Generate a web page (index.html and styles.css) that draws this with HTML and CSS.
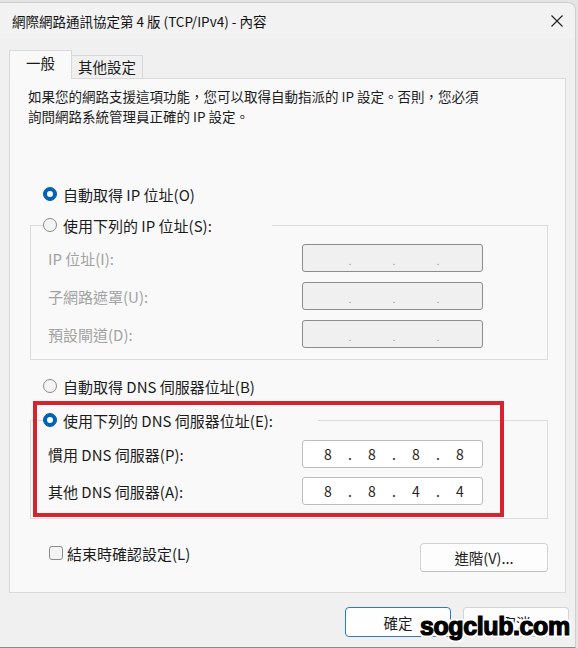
FILE: index.html
```html
<!DOCTYPE html>
<html lang="zh-Hant">
<head>
    <meta charset="UTF-8">
    <meta name="viewport" content="width=device-width, initial-scale=1.0">
    <title>網際網路通訊協定第 4 版 (TCP/IPv4) - 內容</title>
    <link rel="stylesheet" href="styles.css">
</head>
<body>
    <div class="window">
        <!-- Title bar -->
        <div class="titlebar">
            <span class="title">網際網路通訊協定第 4 版 (TCP/IPv4) - 內容</span>
            <svg class="close" width="12" height="12" viewBox="0 0 12 12">
                <path d="M0.5 0.5 L11.5 11.5 M11.5 0.5 L0.5 11.5" stroke="#1f1f1f" stroke-width="1.1" fill="none"/>
            </svg>
        </div>

        <!-- Tabs -->
        <div class="tabs">
            <div class="tab active">一般</div>
            <div class="tab">其他設定</div>
        </div>

        <div class="panel">
            <p class="intro">如果您的網路支援這項功能，您可以取得自動指派的 IP 設定。否則，您必須<br>詢問網路系統管理員正確的 IP 設定。</p>

            <div class="option first">
                <span class="radio on"></span>自動取得 IP 位址(O)
            </div>

            <div class="group ip-group">
                <div class="option legend ip-legend">
                    <span class="radio"></span>使用下列的 IP 位址(S):
                </div>
                <div class="fields">
                    <div class="field-row">
                        <span class="label disabled">IP 位址(I):</span>
                        <div class="ipbox off"><span></span><i>.</i><span></span><i>.</i><span></span><i>.</i><span></span></div>
                    </div>
                    <div class="field-row">
                        <span class="label disabled">子網路遮罩(U):</span>
                        <div class="ipbox off"><span></span><i>.</i><span></span><i>.</i><span></span><i>.</i><span></span></div>
                    </div>
                    <div class="field-row">
                        <span class="label disabled">預設閘道(D):</span>
                        <div class="ipbox off"><span></span><i>.</i><span></span><i>.</i><span></span><i>.</i><span></span></div>
                    </div>
                </div>
            </div>

            <div class="option dns-auto">
                <span class="radio"></span>自動取得 DNS 伺服器位址(B)
            </div>

            <div class="group dns-group">
                <div class="option legend dns-legend">
                    <span class="radio on"></span>使用下列的 DNS 伺服器位址(E):
                </div>
                <div class="fields dns-fields">
                    <div class="field-row">
                        <span class="label">慣用 DNS 伺服器(P):</span>
                        <div class="ipbox"><span>8</span><i>.</i><span>8</span><i>.</i><span>8</span><i>.</i><span>8</span></div>
                    </div>
                    <div class="field-row">
                        <span class="label">其他 DNS 伺服器(A):</span>
                        <div class="ipbox"><span>8</span><i>.</i><span>8</span><i>.</i><span>4</span><i>.</i><span>4</span></div>
                    </div>
                </div>
            </div>

            <div class="bottom-row">
                <div class="check-row"><span class="checkbox"></span>結束時確認設定(L)</div>
                <button class="btn advanced">進階(V)...</button>
            </div>
        </div>

        <div class="footer">
            <button class="btn default">確定</button>
            <button class="btn">取消</button>
        </div>

        <!-- annotation over the screenshot -->
        <div class="highlight"></div>
        <div class="watermark">sogclub.com</div>
    </div>
</body>
</html>
```

FILE: styles.css
```css
* {
    box-sizing: border-box;
}

body {
    margin: 0;
    background-color: #e4e4e4;
    font-family: "Noto Sans CJK TC", "Noto Sans", sans-serif;
    font-size: 15px;
    color: #1b1b1b;
}

.window {
    position: relative;
    width: 576px;
    height: 646px;
    margin-top: 2px;
    background-color: #f0f0f0;
    border-top: 1px solid #cfcfcf;
    border-right: 1px solid #cfcfcf;
    border-bottom: 1px solid #8a8a8a;
    border-top-right-radius: 8px;
}

/* Title bar */
.titlebar {
    display: flex;
    align-items: center;
    justify-content: space-between;
    height: 35px;
    padding: 0 12px 0 12px;
    background-color: #f2f2f2;
    border-top-right-radius: 8px;
}

.title {
    font-size: 13.5px;
    color: #111;
}

.close {
    display: block;
}

/* Tabs */
.tabs {
    display: flex;
    align-items: flex-end;
    height: 40px;
    padding-left: 9px;
    font-size: 14.5px;
}

.tab {
    height: 23px;
    padding: 0 6px;
    line-height: 22px;
    background-color: #f0f0f0;
    border: 1px solid #d9d9d9;
    border-bottom: none;
    border-left: none;
}

.tab.active {
    position: relative;
    z-index: 1;
    height: 29px;
    width: 63px;
    margin-bottom: -1px;
    padding: 0;
    text-align: center;
    line-height: 24px;
    background-color: #f9f9f9;
    border-left: 1px solid #d9d9d9;
}

/* Main panel */
.panel {
    height: 515px;
    margin: 0 9px;
    padding: 7px 17px 0 18px;
    background-color: #f9f9f9;
    border: 1px solid #dadada;
}

.intro {
    margin: 0;
    font-size: 13.5px;
    line-height: 20px;
}

.option {
    display: flex;
    align-items: center;
    height: 20px;
    padding-left: 15px;
}

.option.first {
    margin-top: 58px;
}

.radio {
    flex: none;
    position: relative;
    width: 14px;
    height: 14px;
    margin-right: 6px;
    border-radius: 50%;
    border: 1px solid #8b8b8b;
    background-color: #f4f4f4;
}

.radio.on {
    border-color: #0062b8;
    background-color: #0062b8;
}

.radio.on::after {
    content: "";
    position: absolute;
    left: 3px;
    top: 3px;
    width: 6px;
    height: 6px;
    border-radius: 50%;
    background-color: #fff;
}

/* Group boxes */
.group {
    margin-left: 2px;
    border: 1px solid #dcdcdc;
    padding: 0 0 11px 17px;
}

.ip-group {
    margin-top: 21px;
}

.legend {
    margin-top: -11px;
    margin-left: -5px;
    padding-left: 0;
    background-color: #f9f9f9;
}

.ip-legend {
    width: 229px;
}

.dns-legend {
    width: 275px;
}

.fields {
    display: flex;
    flex-direction: column;
    gap: 10px;
    margin-top: 9px;
}

.dns-fields {
    gap: 9px;
    margin-top: 10px;
}

.field-row {
    display: grid;
    grid-template-columns: 254px 181px;
    align-items: center;
    height: 28px;
}

.label {
    color: #1b1b1b;
}

.label.disabled {
    color: #a2a2a2;
}

.ipbox {
    display: flex;
    align-items: center;
    height: 28px;
    padding-left: 7px;
    background-color: #fff;
    border: 1px solid #bdbdbd;
    border-radius: 3px;
    font-size: 14px;
    color: #262626;
}

.ipbox span {
    width: 36px;
    text-align: center;
}

.ipbox i {
    width: 8px;
    font-style: normal;
    text-align: center;
}

.ipbox.off {
    background-color: #f0f0f0;
    border-color: #8d8d8d;
    color: #9a9a9a;
    font-size: 9px;
    padding-top: 6px;
}

.dns-auto {
    margin-top: 16px;
}

.dns-group {
    margin-top: 24px;
    padding-bottom: 13px;
}

/* Bottom of panel */
.bottom-row {
    display: flex;
    justify-content: space-between;
    align-items: flex-start;
    margin-top: 24px;
}

.check-row {
    display: flex;
    align-items: center;
    height: 20px;
    margin-left: 21px;
}

.checkbox {
    width: 14px;
    height: 14px;
    margin-right: 4px;
    border: 1px solid #8b8b8b;
    border-radius: 3px;
    background-color: #f4f4f4;
}

.btn {
    height: 30px;
    padding: 0;
    font-family: inherit;
    font-size: 14.5px;
    color: #1b1b1b;
    background-color: #fdfdfd;
    border: 1px solid #d3d3d3;
    border-bottom-color: #c2c2c2;
    border-radius: 4px;
}

.advanced {
    width: 128px;
    height: 29px;
}

.footer {
    display: flex;
    justify-content: flex-end;
    gap: 12px;
    margin-top: 14px;
    padding-right: 6px;
}

.footer .btn {
    width: 106px;
}

.btn.default {
    border: 1px solid #2e78c4;
    background-color: #fefefe;
}

/* Red annotation box and watermark overlay */
.highlight {
    position: absolute;
    left: 33px;
    top: 398px;
    width: 471px;
    height: 116px;
    border: 4px solid #d7232d;
}

.watermark {
    position: absolute;
    left: 420px;
    top: 609px;
    font-family: "Liberation Sans", Arial, sans-serif;
    font-weight: bold;
    font-size: 25px;
    letter-spacing: -0.4px;
    color: #000;
    -webkit-text-stroke: 1.2px #000;
    text-shadow: 2px 2px 0 #fff, -2px -2px 0 #fff, 2px -2px 0 #fff, -2px 2px 0 #fff, 0 2px 0 #fff, 0 -2px 0 #fff, 2px 0 0 #fff, -2px 0 0 #fff;
}
```
